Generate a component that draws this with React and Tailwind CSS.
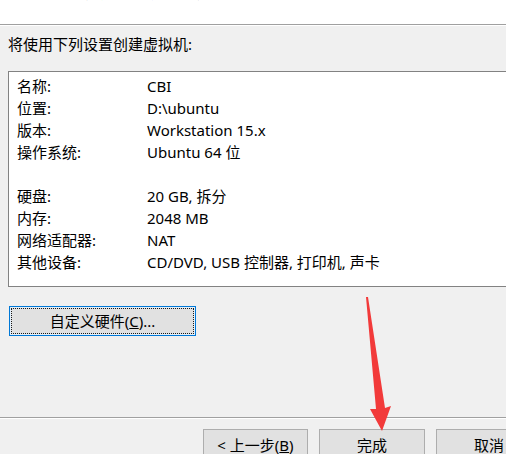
import React from "react";

const rows = [
  ["名称:", "CBI"],
  ["位置:", "D:\\ubuntu"],
  ["版本:", "Workstation 15.x"],
  ["操作系统:", "Ubuntu 64 位"],
  ["", ""],
  ["硬盘:", "20 GB, 拆分"],
  ["内存:", "2048 MB"],
  ["网络适配器:", "NAT"],
  ["其他设备:", "CD/DVD, USB 控制器, 打印机, 声卡"],
];

export default function App() {
  return (
    <div
      className="relative w-[506px] h-[454px] overflow-hidden bg-[#f0f0f0] text-black text-[15px]"
      style={{ fontFamily: '"Noto Sans", "Noto Sans CJK SC", sans-serif' }}
    >
      {/* Header (cut off at top) */}
      <div className="h-[25px] bg-white border-b border-[#a0a0a0] overflow-hidden">
        <div className="ml-[50px] -mt-[18px] leading-[20px] whitespace-nowrap">
          单击“完成”创建虚拟机，然后可以安装 Ubuntu 64 位。
        </div>
      </div>
      <div className="h-px bg-white"></div>

      {/* Body */}
      <div className="pl-[8px]">
        <div className="mt-[8px] leading-[20px]">将使用下列设置创建虚拟机:</div>

        <div className="mt-[17px] w-[520px] bg-white border border-[#828282] pt-[3px] pb-[13px] pl-[8px]">
          {rows.map(([label, value], i) => (
            <div key={i} className="flex h-[22px] items-center leading-[22px]">
              <div className="w-[130px]">{label}</div>
              <div>{value}</div>
            </div>
          ))}
        </div>

        <button className="mt-[19px] ml-px w-[187px] h-[30px] border border-[#0078d7] bg-[#e5f1fb] p-px">
          <div className="w-full h-full border border-dotted border-[#1a1a1a] bg-[#e1e1e1] flex items-center justify-center leading-none">
            <span>
              自定义硬件(<span className="underline">C</span>)...
            </span>
          </div>
        </button>
      </div>

      {/* Footer */}
      <div className="mt-[81px] border-t border-[#a0a0a0]">
        <div className="h-px bg-white"></div>
        <div className="flex gap-[11px] pl-[203px] pt-[10px] w-[640px]">
          <button className="shrink-0 w-[105px] h-[32px] border border-[#adadad] bg-[#e1e1e1] flex items-center justify-center">
            <span>
              &lt; 上一步(<span className="underline">B</span>)
            </span>
          </button>
          <button className="shrink-0 w-[106px] h-[32px] border border-[#adadad] bg-[#e1e1e1] flex items-center justify-center">
            完成
          </button>
          <button className="shrink-0 w-[106px] h-[32px] border border-[#adadad] bg-[#e1e1e1] flex items-center justify-center">
            取消
          </button>
        </div>
      </div>

      {/* Red arrow annotation */}
      <svg
        className="absolute left-0 top-0 pointer-events-none"
        width="506"
        height="454"
        viewBox="0 0 506 454"
      >
        <polygon
          points="366,297 368,297 385,408 391,406 382,431 370,409 376,409"
          fill="#f23a3a"
        />
      </svg>
    </div>
  );
}
